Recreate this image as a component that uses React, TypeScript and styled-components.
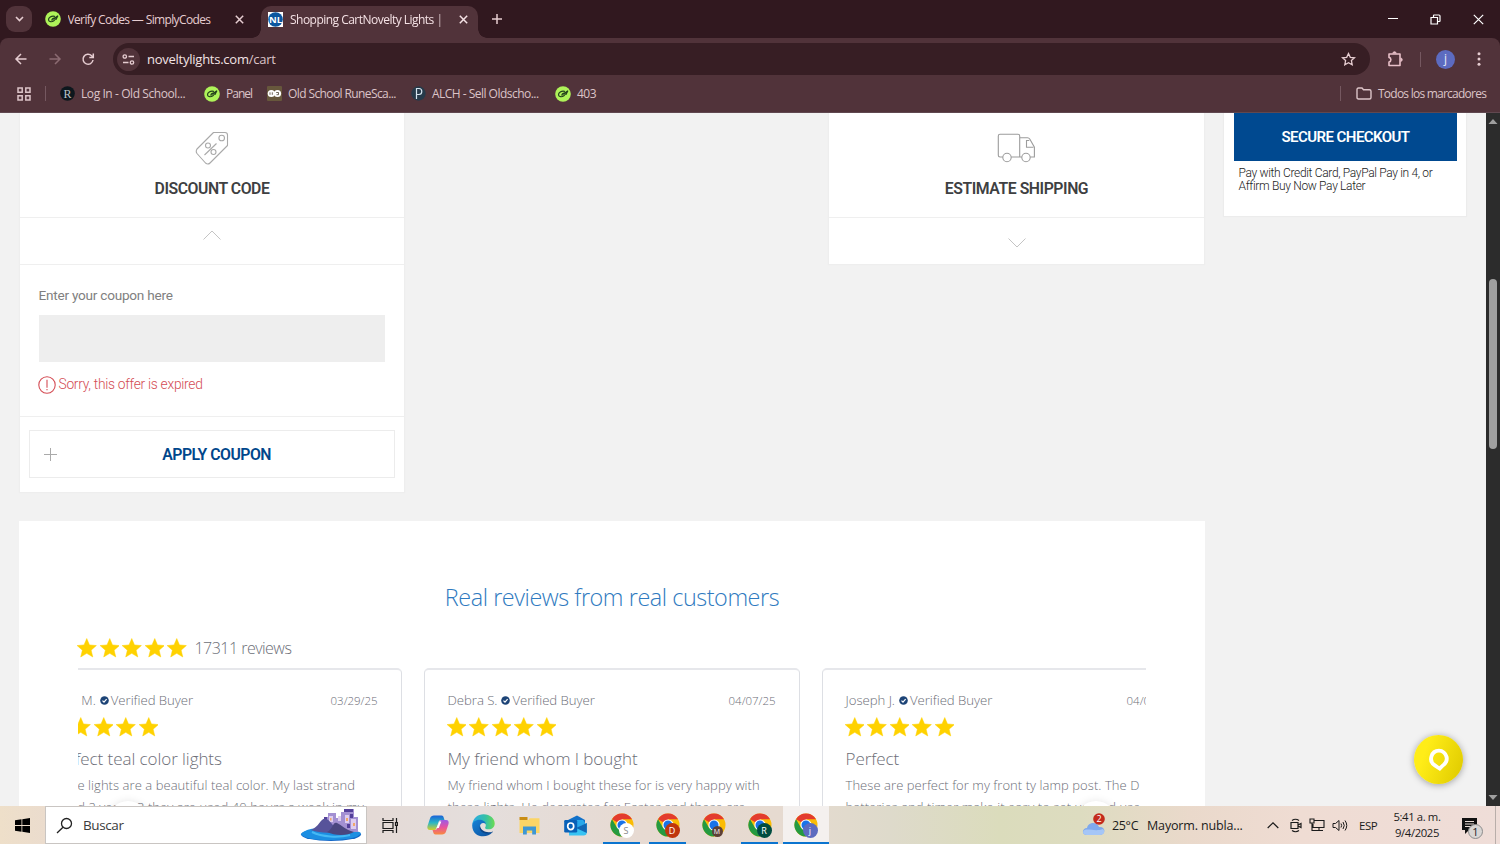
import React from "react";
import styled, { createGlobalStyle, css } from "styled-components";

const ui = `"Open Sans", "Noto Sans", sans-serif`;

const Global = createGlobalStyle`
  *, *::before, *::after { box-sizing: border-box; }
  html, body { margin: 0; padding: 0; }
  body { width: 1500px; height: 844px; overflow: hidden; background: #f2f2f2; font-family: ${ui}; }
  svg { display: block; flex: none; }
`;

const Screen = styled.div`
  width: 1500px;
  height: 844px;
  display: flex;
  flex-direction: column;
  overflow: hidden;
`;

/* A label with a fixed slot width, so neighbours keep their place */
const Label = styled.span<{ $w?: number; $size?: number; $ls?: number; $color?: string }>`
  display: block;
  flex: none;
  width: ${(p) => (p.$w ? `${p.$w}px` : "auto")};
  font-size: ${(p) => p.$size ?? 12}px;
  letter-spacing: ${(p) => p.$ls ?? 0}px;
  color: ${(p) => p.$color ?? "inherit"};
  white-space: nowrap;
`;

/* ---------- Browser chrome ---------- */

const TabStrip = styled.div`
  height: 38px;
  flex: none;
  display: flex;
  align-items: center;
  background: #31181f;
  color: #e6cdd1;
  padding-left: 6px;
`;

const TabSearch = styled.div`
  width: 26px;
  height: 26px;
  border-radius: 9px;
  background: #51333a;
  display: flex;
  align-items: center;
  justify-content: center;
`;

const Tab = styled.div<{ $active?: boolean }>`
  position: relative;
  height: 32px;
  margin-top: 6px;
  width: ${(p) => (p.$active ? 217 : 229)}px;
  padding: 0 ${(p) => (p.$active ? 10 : 17)}px 6px ${(p) => (p.$active ? 7 : 12.5)}px;
  display: flex;
  align-items: center;
  ${(p) =>
    p.$active &&
    css`
      background: #51333a;
      border-radius: 10px 10px 0 0;
      color: #f5e2e5;
      &::before,
      &::after {
        content: "";
        position: absolute;
        bottom: 0;
        width: 9px;
        height: 9px;
      }
      &::before {
        left: -9px;
        background: radial-gradient(circle at 0 0, transparent 8.5px, #51333a 9px);
      }
      &::after {
        right: -9px;
        background: radial-gradient(circle at 100% 0, transparent 8.5px, #51333a 9px);
      }
    `}
`;

const TabTitle = styled.span<{ $fade?: boolean; $ls: number }>`
  flex: 1;
  margin-left: 7px;
  margin-right: ${(p) => (p.$fade ? 13 : 9)}px;
  overflow: hidden;
  white-space: nowrap;
  font-size: 12px;
  letter-spacing: ${(p) => p.$ls}px;
  ${(p) => p.$fade && css`mask-image: linear-gradient(90deg, #000 92%, transparent 108%);`}
`;

const NewTab = styled.div`
  flex: 1;
  padding-left: 13px;
`;

const WindowControls = styled.div`
  display: flex;
  width: 129px;
`;

const WindowControl = styled.div`
  width: 43px;
  display: flex;
  justify-content: center;
`;

const ToolbarBack = styled.div`
  flex: none;
  background: #31181f;
`;

const Toolbar = styled.div`
  height: 42px;
  background: #51333a;
  border-radius: 8px 8px 0 0;
  display: flex;
  align-items: center;
  color: #e6cdd1;
  padding: 0 12px 0 12px;
`;

const NavButtons = styled.div`
  width: 101px;
  display: flex;
  gap: 15.5px;
`;

const Omnibox = styled.div`
  width: 1257px;
  height: 32px;
  border-radius: 16px;
  background: #371e24;
  display: flex;
  align-items: center;
  padding: 0 14px 0 4px;
`;

const SiteInfo = styled.div`
  width: 23px;
  height: 23px;
  border-radius: 50%;
  background: #51333a;
  display: flex;
  align-items: center;
  justify-content: center;
  margin-right: 7px;
`;

const Url = styled.span`
  flex: 1;
  font-size: 13px;
  letter-spacing: -0.25px;
  color: #f3e3e5;
  em {
    font-style: normal;
    color: #dcc4c8;
  }
`;

const ToolbarActions = styled.div`
  flex: 1;
  display: flex;
  align-items: center;
  padding-left: 16px;
`;

const ToolDivider = styled.i<{ $ml: number; $mr: number }>`
  width: 1px;
  height: 15px;
  background: #755860;
  margin: 0 ${(p) => p.$mr}px 0 ${(p) => p.$ml}px;
`;

const Avatar = styled.div`
  width: 19px;
  height: 19px;
  border-radius: 50%;
  background: #5c6bc0;
  color: #e8eaf6;
  font-size: 12px;
  line-height: 17px;
  text-align: center;
`;

const BookmarksBar = styled.div`
  height: 33px;
  background: #51333a;
  border-bottom: 1px solid #604850;
  display: flex;
  align-items: center;
  padding: 0 12px 5px 17px;
  color: #dcc4c8;
`;

const Bookmark = styled.div`
  display: flex;
  align-items: center;
  gap: 6px;
`;

const Spacer = styled.div`
  flex: 1;
`;

/* ---------- Page ---------- */

const Viewport = styled.div`
  height: 693px;
  flex: none;
  display: flex;
  background: #f2f2f2;
  overflow: hidden;
`;

const Page = styled.main`
  position: relative;
  flex: 1;
  display: flex;
  align-items: flex-start;
  padding-left: 19px;
  gap: 19px;
  font-family: Roboto, sans-serif;
`;

const MainColumn = styled.div`
  width: 1186px;
`;

const CartTools = styled.div`
  height: 408px;
  display: flex;
  justify-content: space-between;
  align-items: flex-start;
  padding: 0 1px;
`;

const ToolCard = styled.section<{ $w: number }>`
  width: ${(p) => p.$w}px;
  background: #fff;
  box-shadow: 0 0 1px 1px #eee;
`;

const CardHead = styled.header`
  height: 105px;
  display: flex;
  flex-direction: column;
  align-items: center;
  border-bottom: 1px solid #efefef;
`;

const HeadIcon = styled.div`
  height: 65px;
  padding-top: 18px;
`;

const CardTitle = styled.h2`
  margin: 0;
  font-size: 15.8px;
  line-height: 21px;
  font-weight: 600;
  letter-spacing: -0.45px;
  color: #3e4042;
`;

const ToggleRow = styled.div<{ $pt: number; $line?: boolean }>`
  height: ${(p) => (p.$line ? 47 : 46)}px;
  padding-top: ${(p) => p.$pt}px;
  display: flex;
  justify-content: center;
  align-items: flex-start;
  ${(p) => p.$line && css`border-bottom: 1px solid #efefef;`}
`;

const CouponForm = styled.div`
  height: 152px;
  padding: 21px 19px 0 18.5px;
  border-bottom: 1px solid #efefef;
`;

const CouponLabel = styled.label`
  display: block;
  font-size: 13.6px;
  line-height: 19px;
  letter-spacing: -0.24px;
  color: #808080;
`;

const CouponInput = styled.div`
  height: 47px;
  margin-top: 10px;
  background: #eee;
`;

const CouponError = styled.div`
  display: flex;
  align-items: center;
  gap: 3px;
  margin-top: 13px;
  margin-left: -1px;
  font-size: 13.8px;
  font-weight: 300;
  line-height: 19px;
  letter-spacing: -0.28px;
  color: #d44c54;
`;

const ApplyButton = styled.button`
  width: 366px;
  height: 48px;
  margin: 13px 9px 14px;
  padding: 0 123px 0 14px;
  display: flex;
  align-items: center;
  justify-content: space-between;
  background: #fff;
  border: 1px solid #ececec;
  font: 600 15.8px Roboto, sans-serif;
  letter-spacing: -0.5px;
  color: #00468b;
`;

const CheckoutCard = styled.aside`
  width: 242px;
  height: 103px;
  background: #fff;
  box-shadow: 0 0 1px 1px #ececec;
  padding: 0 10px;
`;

const CheckoutButton = styled.button`
  width: 223px;
  height: 48px;
  display: block;
  border: 0;
  padding: 0;
  background: #004990;
  color: #fff;
  font: 600 15px Roboto, sans-serif;
  letter-spacing: -0.56px;
`;

const PayNote = styled.p`
  margin: 5.5px 0 0 4.5px;
  font-size: 12px;
  font-weight: 300;
  line-height: 13px;
  letter-spacing: -0.33px;
  color: #222;
`;

const Reviews = styled.section`
  height: 300px;
  background: #fff;
  padding: 0 59px;
  font-family: "Open Sans", sans-serif;
  font-weight: 300;
`;

const ReviewsTitle = styled.h2`
  margin: 0;
  padding-top: 59px;
  font-size: 23.4px;
  letter-spacing: -0.44px;
  line-height: 34px;
  font-weight: 300;
  text-align: center;
  color: #2f7ac0;
`;

const Summary = styled.div`
  display: flex;
  align-items: center;
  height: 22px;
  margin: 23px 0 0 -1px;
  gap: 8px;
  color: #6c6e77;
  font-size: 16px;
  line-height: 24px;
  letter-spacing: -0.52px;
`;

const Carousel = styled.div`
  position: relative;
  width: 1068px;
  margin-top: 9px;
  overflow: hidden;
`;

const Track = styled.div`
  display: flex;
  gap: 22.5px;
  margin-left: -52px;
`;

const ReviewCard = styled.article`
  width: 375.5px;
  flex: none;
  height: 200px;
  border: 1px solid #dddfe4;
  border-top: 2px solid #e6e7eb;
  border-radius: 5px;
  padding: 20px 23px 0 22.5px;
  color: #6c6e77;
`;

const ReviewMeta = styled.div`
  display: flex;
  align-items: center;
  height: 20px;
  font-size: 13.2px;
  letter-spacing: -0.04px;
`;

const Verified = styled.span`
  display: flex;
  align-items: center;
  gap: 2px;
  margin-left: 4px;
  flex: 1;
`;

const ReviewDate = styled.time`
  font-size: 11.5px;
`;

const Stars = styled.div`
  display: flex;
  gap: 3px;
  height: 20px;
`;

const ReviewStars = styled(Stars)`
  margin: 7px 0 0 -1px;
`;

const ReviewTitle = styled.h3`
  margin: 9px 0 0;
  font-size: 17px;
  line-height: 26px;
  letter-spacing: -0.06px;
  font-weight: 300;
`;

const ReviewText = styled.p`
  margin: 2px 0 0;
  font-size: 13px;
  line-height: 22px;
  letter-spacing: 0.06px;
  white-space: pre;
`;

const CarouselArrow = styled.div<{ $x: number }>`
  position: absolute;
  left: ${(p) => p.$x}px;
  top: 133px;
  width: 40px;
  height: 40px;
  border-radius: 50%;
  background: #fff;
  box-shadow: 0 0 8px rgba(0, 0, 0, 0.1);
`;

const ChatBubble = styled.div`
  position: absolute;
  left: 1414px;
  top: 622px;
  width: 49px;
  height: 49px;
  border-radius: 50%;
  background: linear-gradient(110deg, #ffed18 25%, #e0cb00 95%);
  box-shadow: 0 1px 7px rgba(0, 0, 0, 0.35);
  display: flex;
  align-items: center;
  justify-content: center;
`;

const Scrollbar = styled.div`
  width: 14px;
  background: #2c2c2c;
  display: flex;
  flex-direction: column;
  align-items: center;
  padding: 6px 0 6px;
`;

const Thumb = styled.div`
  width: 8px;
  height: 170px;
  margin-top: 155px;
  margin-bottom: auto;
  border-radius: 4px;
  background: #9f9f9f;
`;

/* ---------- Taskbar ---------- */

const Taskbar = styled.footer`
  height: 38px;
  flex: none;
  display: flex;
  align-items: center;
  color: #1b1b1b;
  background: linear-gradient(
    90deg, #eedfc9 0, #eadbcf 60px, #e4dad6 375px, #e4dedc 480px, #e7dad2 640px,
    #e6dad0 780px, #dedacb 890px, #dbdcbc 1000px, #dddcc0 1080px, #ead9cb 1190px, #efdcd3 1300px, #efddd8 1500px
  );
`;

const TaskSlot = styled.div<{ $running?: boolean; $active?: boolean }>`
  position: relative;
  width: 46px;
  height: 38px;
  flex: none;
  display: flex;
  align-items: center;
  justify-content: center;
  background: ${(p) => (p.$active ? "#f4f0ee" : "transparent")};
  ${(p) =>
    (p.$running || p.$active) &&
    css`
      &::after {
        content: "";
        position: absolute;
        bottom: 0;
        left: ${p.$active ? 0 : 4}px;
        right: ${p.$active ? 0 : 5}px;
        height: 2px;
        background: #0b74cf;
      }
    `}
`;

const StartSlot = styled(TaskSlot)`
  width: 45px;
`;

const TaskApps = styled.div`
  display: flex;
  width: 715px;
`;

const TaskTail = styled.div`
  display: flex;
  margin-left: 1.5px;
`;

const SearchBox = styled.div`
  width: 322px;
  height: 38px;
  background: #fff;
  border: 1px solid #c9c5c2;
  display: flex;
  align-items: center;
  padding: 0 4px 0 10px;
  gap: 10px;
  color: #3c3c3c;
`;

const Badge = styled.span<{ $bg: string; $fg?: string; $small?: boolean }>`
  position: absolute;
  left: ${(p) => (p.$small ? 21 : 20)}px;
  top: ${(p) => (p.$small ? 20 : 17)}px;
  width: ${(p) => (p.$small ? 11 : 15)}px;
  height: ${(p) => (p.$small ? 11 : 15)}px;
  border-radius: 50%;
  background: ${(p) => p.$bg};
  color: ${(p) => p.$fg ?? "#fff"};
  font-size: ${(p) => (p.$small ? 7 : 9)}px;
  line-height: ${(p) => (p.$small ? 11 : 15)}px;
  text-align: center;
`;

const Tray = styled.div`
  flex: 1;
  display: flex;
  align-items: center;
  font-size: 12px;
`;

const TrayIcons = styled.div`
  display: flex;
  align-items: center;
  gap: 7px;
  width: 92px;
`;

const Clock = styled.div`
  width: 60px;
  text-align: center;
  font-size: 11.3px;
  line-height: 16px;
  letter-spacing: -0.38px;
`;

const Notifications = styled.div`
  position: relative;
  width: 49px;
  height: 38px;
  padding: 12px 0 0 15px;
  border-right: 1px solid #b9aeaa;
`;

const NoteCount = styled.span`
  position: absolute;
  left: 21px;
  top: 18px;
  width: 15px;
  height: 15px;
  border: 1px solid #8c8c8c;
  border-radius: 50%;
  background: #d9d6d4;
  font-size: 11px;
  line-height: 13px;
  text-align: center;
`;

/* ---------- Icons ---------- */

type StrokeProps = { w: number; h: number; d: string; sw?: number; color?: string };
const Stroke = ({ w, h, d, sw = 1.5, color = "currentColor" }: StrokeProps) => (
  <svg width={w} height={h} viewBox={`0 0 ${w} ${h}`} fill="none" stroke={color} strokeWidth={sw}>
    <path d={d} />
  </svg>
);

const Close = () => <Stroke w={9} h={9} d="M.8.8l7.4 7.4M8.2.8L.8 8.2" sw={1.5} />;

const SimplyIcon = () => (
  <svg width="16" height="16" viewBox="0 0 16 16">
    <circle cx="8" cy="8" r="7.800" fill="#aef359" />
    <g fill="none" stroke="#23401c" strokeWidth="1.200" strokeLinecap="round">
      <path d="M9.500 5.400C6.500 4.600 3.300 6.800 3.500 9c.3 2 3.400 2.300 5.400.7 1.600-1.200 1.700-2.600.4-2.600-1.500 0-2.700 1.200-2.300 2.200" />
      <path d="M8 8.300l4.900-3.500-1.900 3.600" />
    </g>
  </svg>
);

const NoveltyIcon = () => (
  <svg width="15" height="15" viewBox="0 0 15 15">
    <rect width="15" height="15" fill="#fff" />
    <circle cx="7.500" cy="7.500" r="7.300" fill="#0b569f" />
    <text x="7.500" y="11" textAnchor="middle" fontSize="9.500" fontWeight="700" fill="#fff" fontFamily="Open Sans">NL</text>
  </svg>
);

const RuneIcon = () => (
  <svg width="15" height="15" viewBox="0 0 15 15">
    <circle cx="7.500" cy="7.500" r="7.300" fill="#0d171d" />
    <text x="7.500" y="12" textAnchor="middle" fontSize="12" fill="#b9c4c8" fontFamily="Liberation Serif">R</text>
  </svg>
);

const OsrsIcon = () => (
  <svg width="15" height="15" viewBox="0 0 15 15">
    <rect width="15" height="15" rx="1" fill="#67573c" />
    <circle cx="4.300" cy="7.500" r="3.600" fill="#fff" />
    <circle cx="10.500" cy="7.500" r="3.600" fill="#fff" />
    <path d="M3 6.300v2.500M5.300 6.300v2.500M9.200 6.500h2.300v2.200H9.500" stroke="#4c4030" fill="none" strokeWidth=".8" />
  </svg>
);

const AlchIcon = () => (
  <svg width="15" height="15" viewBox="0 0 15 15">
    <circle cx="7.500" cy="7.500" r="7.200" fill="#263a4a" />
    <path d="M5.500 13V2.500H8c3.700 0 3.700 6 0 6H5.500" fill="none" stroke="#d5e4ef" strokeWidth="1.200" />
  </svg>
);

const Star = () => (
  <svg width="19.500" height="20" viewBox="0 0 20 20">
    <path d="M10 .3l2.800 6.500 7.100.700-5.400 4.700 1.700 7L10 15.500l-6.200 3.700 1.700-7L.1 7.500l7.100-.700z" fill="#ffd200" stroke="#ffd200" strokeWidth=".5" />
  </svg>
);

const Check = () => (
  <svg width="9" height="9" viewBox="0 0 9 9">
    <circle cx="4.500" cy="4.500" r="4.300" fill="#1d4477" />
    <path d="M2.500 4.600l1.500 1.500 2.600-2.900" fill="none" stroke="#fff" strokeWidth="1.200" />
  </svg>
);

const TagIcon = () => (
  <svg width="34" height="35" viewBox="0 0 34 35" fill="none" stroke="#a9a9a9" strokeWidth="1.100">
    <path d="M18.500 1.500H30q2.500 0 2.500 2.500v10.500L15 32q-2 2-4.500 0L2 22.500q-1.500-2 0-4.500z" strokeLinejoin="round" />
    <circle cx="26.700" cy="7" r="2.800" />
    <circle cx="13" cy="14.500" r="2.500" />
    <circle cx="18.500" cy="21" r="2.500" />
    <path d="M9.500 24L21.500 12.500" />
  </svg>
);

const TruckIcon = () => (
  <svg width="39" height="33" viewBox="0 -2 39 33" fill="none" stroke="#9c9c9c" strokeWidth="1.100">
    <path d="M5.800 24H3q-1.700 0-1.700-1.700V3Q1.300 1.300 3 1.300h18q1.700 0 1.700 1.700v21H14.200M22.700 4.800h7.800q1.500 0 2.400 1.400l4.500 8V24h-4.200M24.800 24h-2" />
    <path d="M36.500 14.300h-7V7.500h2.800" />
    <circle cx="10" cy="24.500" r="4.200" />
    <circle cx="29" cy="24.500" r="4.200" />
  </svg>
);

const ChromeIcon = () => (
  <svg width="24" height="24" viewBox="0 0 24 24">
    <circle cx="12" cy="12" r="11.500" fill="#fbbc04" />
    <path d="M12 12L2 6.300A11.500 11.500 0 0 1 22 6.300H12z" fill="#e33b2e" />
    <path d="M2 6.200A11.500 11.500 0 0 0 12 23.500l5-8.700L12 12 7 14.800z" fill="#249a41" />
    <circle cx="12" cy="12" r="5.600" fill="#fff" />
    <circle cx="12" cy="12" r="4.500" fill="#1a73e8" />
  </svg>
);

const EdgeIcon = () => (
  <svg width="23" height="23" viewBox="0 0 24 24">
    <defs>
      <linearGradient id="edgeTop" x1="0" x2="1"><stop offset="0" stopColor="#2aa9e8" /><stop offset=".6" stopColor="#35c1a5" /><stop offset="1" stopColor="#6bdc50" /></linearGradient>
      <linearGradient id="edgeLow" x1="0" x2="1" y2="1"><stop offset="0" stopColor="#1583d8" /><stop offset="1" stopColor="#0c4f9c" /></linearGradient>
    </defs>
    <path d="M.3 11C1 4.500 6 .3 12 .3c7 0 11.700 4.700 11.700 9.700 0 4-3 6-6 6-3.500 0-4.500-1.300-3.800-2.300 1.200-2 .4-5.200-3.400-5.200C6 8.500.8 9 .3 11z" fill="url(#edgeTop)" />
    <path d="M.2 12C.3 8.500 3.800 6 7.800 6c3.500 0 6.300 2 6.700 4.300-4-2.200-6.800.5-6 4 .9 4 6 7 12.800 4.700C16 26 .2 25 .2 12z" fill="url(#edgeLow)" />
    <path d="M8.400 12.500C6.500 17 12 23 21.500 19c.5-.4.3-.8-.3-.6-6 1.600-11.600-.4-12.800-5.900z" fill="#0a4589" />
  </svg>
);

const CopilotIcon = () => (
  <svg width="22" height="20" viewBox="0 0 22 20">
    <defs>
      <linearGradient id="copA" y2="1" x2="0"><stop offset="0" stopColor="#1b62d8" /><stop offset=".5" stopColor="#2ab6c6" /><stop offset="1" stopColor="#d6cf28" /></linearGradient>
      <linearGradient id="copB" y2="1" x2="0"><stop offset="0" stopColor="#9a5ae8" /><stop offset=".5" stopColor="#e8529f" /><stop offset="1" stopColor="#f98a3c" /></linearGradient>
    </defs>
    <path d="M7 .5h7.500c1.500 0 2 1 2.500 3L17.500 5h-3c-2 0-2.800 1-3.300 3L9.500 13c-.6 1.700-1.500 2-3 2H3c-2.500 0-3-2-2.500-4L3 3.500C3.800 1.200 5 .5 7 .5z" fill="url(#copA)" />
    <path d="M15 19.500H8.500c-1.500 0-2-1-2.500-3L5.500 15h2c2 0 2.800-1 3.300-3L12.500 7c.6-1.700 1.500-2 3-2H19c2.500 0 3 2 2.500 4L19 16.500c-.8 2.300-2 3-4 3z" fill="url(#copB)" />
    <path d="M12.500 6.500h1.800L11.800 13H9.500z" fill="#fff" />
  </svg>
);

const FolderIcon = () => (
  <svg width="21" height="19" viewBox="0 0 21 19">
    <path d="M.5 1h8v3H.5z" fill="#c98d14" />
    <path d="M.5 4h9l1-1.700H20.500V17H.5z" fill="#fbd566" />
    <path d="M4 18.500v-8h13v8h-3.800v-4H7.800v4z" fill="#3f97d3" />
  </svg>
);

const OutlookIcon = () => (
  <svg width="23" height="21" viewBox="0 0 23 21">
    <path d="M4 5L13 .5 21 5v8H4z" fill="#1271c9" />
    <path d="M10 5h9l2 3v8H8z" fill="#28a8ea" />
    <path d="M5 20.500h14.500q3.300 0 3.300-3V8L5 17z" fill="#38c3f3" />
    <path d="M22.800 8v10L12 13z" fill="#1267b4" />
    <rect x=".2" y="5" width="13" height="12.500" rx="1.200" fill="#0861b8" />
    <ellipse cx="6.700" cy="11.300" rx="3" ry="3.300" fill="none" stroke="#fff" strokeWidth="1.700" />
  </svg>
);

const IslandArt = () => (
  <svg width="62" height="34" viewBox="0 0 62 34">
    <ellipse cx="31" cy="26.500" rx="30" ry="6.500" fill="#1368c8" />
    <path d="M1 26C8 19 18 20 30 22c12 1 24-1 31 3-3 6-19 7-32 7C14 32 3 30 1 26z" fill="#1c8fe2" />
    <path d="M12 24C22 29 38 30 50 27" stroke="#45b9f4" strokeWidth="2" fill="none" />
    <path d="M28 5h8v5h5V4h4V1h9v8h4v15H24V9h4z" fill="#a390d2" />
    <path d="M29 8h4v6h-4zM45 7h4v8h-4zM51 11h5v10h-5zM38 8h3v5h-3z" fill="#decdf0" />
    <path d="M44 1h9v3h-9zM24 9h3v3h-3zM50 6h3v4h-3zM47 16h3v4h-3z" fill="#54409a" />
    <path d="M11 22C20 18 21 9 26 11c4 1 7 7 12 12-8 3-18 2-27-1z" fill="#57539a" />
    <path d="M27 24c6-3 6-11 10-9 5 2 8 7 17 9-7 4-19 4-27 0z" fill="#4a467f" />
    <path d="M46 10h2v3h-2zM53 15h2v3h-2zM30 10h1.500v2.500H30z" fill="#f0a76b" />
  </svg>
);

const CloudIcon = () => (
  <svg width="24" height="24" viewBox="0 0 24 24">
    <path d="M5 22C-1 22 0 15 5 15c1-6 10-7 12-1 7-1 7 8 1 8z" fill="#7fa9ec" />
    <path d="M5 22C0 22 0 17 4 16.500c5-.500 10 2 17-.500 3 3 0 6-3 6z" fill="#a5c6f7" />
    <circle cx="17" cy="6" r="5.800" fill="#c42b1c" />
    <text x="17" y="9.300" fontSize="9" textAnchor="middle" fill="#fff" fontFamily="Open Sans">2</text>
  </svg>
);

const StarRow = () => <>{[0, 1, 2, 3, 4].map((i) => <Star key={i} />)}</>;

/* ---------- Data ---------- */

const bookmarks = [
  { icon: <RuneIcon />, text: "Log In - Old School...", w: 123, ls: -0.42 },
  { icon: <SimplyIcon />, text: "Panel", w: 41, ls: -1 },
  { icon: <OsrsIcon />, text: "Old School RuneSca...", w: 123, ls: -0.6 },
  { icon: <AlchIcon />, text: "ALCH - Sell Oldscho...", w: 123, ls: -0.52 },
  { icon: <SimplyIcon />, text: "403", w: 30, ls: -0.5 },
];

const reviews = [
  { name: "Erica M.", date: "03/29/25", title: "Perfect teal color lights", text: "These lights are a beautiful teal color. My last strand\nlasted 2 years, 3 they are used 40 hours a week in my" },
  { name: "Debra S.", date: "04/07/25", title: "My friend whom I bought", text: "My friend whom I bought these for is very happy with\nthese lights. He decorates for Easter and these are" },
  { name: "Joseph J.", date: "04/07/25", title: "Perfect", text: "These are perfect for my front ty lamp post. The D\nbatteries and timer make it easy to set up and use" },
];

const chromeWindows = [
  { mark: "S", bg: "#fff", fg: "#888", running: true },
  { mark: "D", bg: "#bf360c", running: true },
  { mark: "M", bg: "#5d4037", small: true },
  { mark: "R", bg: "#004d40", running: true },
  { mark: "j", bg: "#5c6bc0", active: true },
];

const BrowserFrame = () => (
  <>
    <TabStrip>
      <TabSearch><Stroke w={9} h={6} d="M1 1l3.500 3.500L8 1" sw={1.600} /></TabSearch>
      <Tab>
        <SimplyIcon />
        <TabTitle $ls={-0.64}>Verify Codes — SimplyCodes</TabTitle>
        <Close />
      </Tab>
      <Tab $active>
        <NoveltyIcon />
        <TabTitle $fade $ls={-0.52}>Shopping CartNovelty Lights | LED</TabTitle>
        <Close />
      </Tab>
      <NewTab><Stroke w={12} h={12} d="M6 1v10M1 6h10" /></NewTab>
      <WindowControls>
        <WindowControl><Stroke w={10} h={10} d="M0 4.500h10" sw={1} color="#fff" /></WindowControl>
        <WindowControl><Stroke w={11} h={11} d="M1 3.500h6.500V10H1zM3.500 3V1.500q0-.500.500-.500h5q1 0 1 1v5q0 .500-.500.500H8" sw={1.200} color="#fff" /></WindowControl>
        <WindowControl><Stroke w={11} h={11} d="M.8.8l9.400 9.400M10.200.8L.8 10.200" sw={1.200} color="#fff" /></WindowControl>
      </WindowControls>
    </TabStrip>
    <ToolbarBack>
      <Toolbar>
        <NavButtons>
          <Stroke w={18} h={18} d="M14.500 9H4M9 4L4 9l5 5" sw={1.500} />
          <Stroke w={18} h={18} d="M3.500 9H14M9 4l5 5-5 5" sw={1.500} color="#8b6b72" />
          <Stroke w={18} h={18} d="M14 10a5 5 0 1 1-1.400-4.300L14.200 7.200M14.300 3.500v4h-4" sw={1.500} />
        </NavButtons>
        <Omnibox>
          <SiteInfo>
            <svg width="13" height="11" viewBox="0 0 13 11" fill="none" stroke="#e6cdd1" strokeWidth="1.300">
              <circle cx="2.800" cy="2.500" r="1.700" /><path d="M6.500 2.500H12M1 8.500h5.500" /><circle cx="10" cy="8.500" r="1.700" />
            </svg>
          </SiteInfo>
          <Url>noveltylights.com<em>/cart</em></Url>
          <Stroke w={15} h={14} d="M7.500 1.500l1.800 3.800 4.200.5-3.100 2.800.8 4.100-3.700-2-3.700 2 .8-4.100L1.500 5.800l4.200-.5z" sw={1.300} />
        </Omnibox>
        <ToolbarActions>
          <svg width="18" height="18" viewBox="0 0 18 18" fill="none" stroke="#e8c0c8" strokeWidth="1.600">
            <path d="M3 4h11v11.500H3v-3.400c2.500-.5 2.500-4.200 0-4.700z" strokeLinejoin="round" />
            <path d="M6.800 3.500a1.700 1.700 0 0 1 3.400 0M14.500 8a1.700 1.700 0 0 1 0 3.400" fill="#e8c0c8" strokeWidth="1" />
          </svg>
          <ToolDivider $ml={16} $mr={15} />
          <Avatar>j</Avatar>
          <Spacer />
          <svg width="18" height="14" viewBox="0 0 18 14" fill="#e6cdd1"><circle cx="9" cy="1.800" r="1.500" /><circle cx="9" cy="7" r="1.500" /><circle cx="9" cy="12.200" r="1.500" /></svg>
        </ToolbarActions>
      </Toolbar>
      <BookmarksBar>
        <Stroke w={14} h={14} d="M1 1h4.200v4.200H1zM8.800 1H13v4.200H8.800zM1 8.800h4.200V13H1zM8.800 8.800H13V13H8.800z" sw={1.500} />
        <ToolDivider $ml={14} $mr={14} />
        {bookmarks.map((b, i) => (
          <Bookmark key={i}>{b.icon}<Label $w={b.w} $ls={b.ls}>{b.text}</Label></Bookmark>
        ))}
        <Spacer />
        <ToolDivider $ml={0} $mr={15} />
        <Bookmark>
          <Stroke w={16} h={13} d="M1 10.500v-8q0-1.500 1.500-1.500H6l1.500 1.700h6q1.500 0 1.500 1.500v6.300q0 1.500-1.500 1.500h-11Q1 12 1 10.500z" sw={1.400} />
          <Label $w={110} $size={12} $ls={-0.76}>Todos los marcadores</Label>
        </Bookmark>
      </BookmarksBar>
    </ToolbarBack>
  </>
);

const CartPage = () => (
  <Viewport>
    <Page>
      <MainColumn>
        <CartTools>
          <ToolCard $w={384}>
            <CardHead><HeadIcon><TagIcon /></HeadIcon><CardTitle>DISCOUNT CODE</CardTitle></CardHead>
            <ToggleRow $pt={12} $line><Stroke w={18} h={10} d="M.5 9.500L9 1l8.500 8.500" sw={1} color="#c4c4c4" /></ToggleRow>
            <CouponForm>
              <CouponLabel>Enter your coupon here</CouponLabel>
              <CouponInput />
              <CouponError>
                <Stroke w={18} h={18} d="M9 .8a8.200 8.200 0 1 1 0 16.400A8.200 8.200 0 0 1 9 .8M9 3.800v8M9 13v1.300" sw={1.100} />
                Sorry, this offer is expired
              </CouponError>
            </CouponForm>
            <ApplyButton>
              <Stroke w={13} h={13} d="M6.500 0v13M0 6.500h13" sw={1} color="#aaa" />
              APPLY COUPON
            </ApplyButton>
          </ToolCard>
          <ToolCard $w={375}>
            <CardHead><HeadIcon><TruckIcon /></HeadIcon><CardTitle>ESTIMATE SHIPPING</CardTitle></CardHead>
            <ToggleRow $pt={20}><Stroke w={18} h={10} d="M.5.500L9 9l8.500-8.500" sw={1} color="#c4c4c4" /></ToggleRow>
          </ToolCard>
        </CartTools>
        <Reviews>
          <ReviewsTitle>Real reviews from real customers</ReviewsTitle>
          <Summary><Stars><StarRow /></Stars>17311 reviews</Summary>
          <Carousel>
            <Track>
              {reviews.map((r) => (
                <ReviewCard key={r.name}>
                  <ReviewMeta>
                    {r.name}
                    <Verified><Check />Verified Buyer</Verified>
                    <ReviewDate>{r.date}</ReviewDate>
                  </ReviewMeta>
                  <ReviewStars><StarRow /></ReviewStars>
                  <ReviewTitle>{r.title}</ReviewTitle>
                  <ReviewText>{r.text}</ReviewText>
                </ReviewCard>
              ))}
            </Track>
            <CarouselArrow $x={30} />
            <CarouselArrow $x={998} />
          </Carousel>
        </Reviews>
      </MainColumn>
      <CheckoutCard>
        <CheckoutButton>SECURE CHECKOUT</CheckoutButton>
        <PayNote>Pay with Credit Card, PayPal Pay in 4, or<br />Affirm Buy Now Pay Later</PayNote>
      </CheckoutCard>
      <ChatBubble>
        <svg width="22" height="24" viewBox="0 0 22 24" fill="#fff">
          <path
            fillRule="evenodd"
            d="M11 .8a9.800 9.800 0 0 1 4.600 18.400L12 23 5.800 18.900A9.800 9.800 0 0 1 11 .8zM11 4.400a6.200 6.200 0 0 0-3.400 11.200L11.300 18.300l3.300-3A6.200 6.200 0 0 0 11 4.400z"
          />
        </svg>
      </ChatBubble>
    </Page>
    <Scrollbar>
      <svg width="10" height="5" viewBox="0 0 10 5"><path d="M5 0l4.500 5h-9z" fill="#9f9f9f" /></svg>
      <Thumb />
      <svg width="10" height="5" viewBox="0 0 10 5"><path d="M.5 0h9L5 5z" fill="#9f9f9f" /></svg>
    </Scrollbar>
  </Viewport>
);

const WindowsTaskbar = () => (
  <Taskbar>
    <StartSlot>
      <svg width="15" height="15" viewBox="0 0 15 15"><path d="M0 2.200L6.500 1.300v5.800H0zM7.300 1.200L15 0v7.100H7.300zM0 7.900h6.500v5.800L0 12.800zM7.300 7.900H15V15l-7.700-1.200z" /></svg>
    </StartSlot>
    <SearchBox>
      <svg width="17" height="17" viewBox="0 0 17 17" fill="none" stroke="#222" strokeWidth="1.300"><circle cx="10.500" cy="6.500" r="5" /><path d="M7 10.200L1 16" /></svg>
      <Label $size={13.500} $ls={-0.4}>Buscar</Label>
      <Spacer />
      <IslandArt />
    </SearchBox>
    <TaskApps>
      <TaskSlot>
        <Stroke w={16} h={15} d="M1 0v2.500h10V0M1 15v-2.500h10V15M1 4.500h10v6H1zM14.500 0v4M14.500 8v7M13.500 4.700h2v2.600h-2z" sw={1.200} />
      </TaskSlot>
      <TaskTail>
        {[<CopilotIcon />, <EdgeIcon />, <FolderIcon />, <OutlookIcon />].map((icon, i) => <TaskSlot key={i}>{icon}</TaskSlot>)}
        {chromeWindows.map((c) => (
          <TaskSlot key={c.mark} $running={c.running} $active={c.active}>
            <ChromeIcon />
            <Badge $bg={c.bg} $fg={c.fg} $small={c.small}>{c.mark}</Badge>
          </TaskSlot>
        ))}
      </TaskTail>
    </TaskApps>
    <Tray>
      <CloudIcon />
      <Label $w={41} $size={12.500} $ls={-0.3}>&nbsp;&nbsp;25°C</Label>
      <Label $w={120} $size={12.500} $ls={-0.15}>Mayorm. nubla...</Label>
      <TrayIcons>
        <Stroke w={16} h={7} d="M.7 6L6 .8 11.300 6" sw={1.200} />
        <Stroke w={12} h={15} d="M2 2.500Q5.500 0 9 2.500M2 12.500q3.500 2.500 7 0M1 4.500h7v6H1zM8 7l3-1.500v4L8 8" sw={1.200} />
        <Stroke w={16} h={14} d="M5 2.500h10v7H4V6M10 9.500v3M6 12.500h8M1 1h4v4H1zM3 5v7.500h3" sw={1.100} />
        <Stroke w={16} h={13} d="M1 4.500h2.500L7 1.500v10l-3.500-3H1zM9 4.500q1.300 2 0 4M11 3q2.500 3.500 0 7M13 1.500q3.500 5 0 10" sw={1} />
      </TrayIcons>
      <Label $w={28} $size={11.500} $ls={-0.5}>ESP</Label>
      <Clock>5:41 a. m.<br />9/4/2025</Clock>
      <Notifications>
        <svg width="16" height="16" viewBox="0 0 16 16"><path d="M0 0h15v12H7l-4 4v-4H0z" fill="#111" /><path d="M3 3.500h9M3 6h9M3 8.500h6" stroke="#e9dcd6" strokeWidth="1" /></svg>
        <NoteCount>1</NoteCount>
      </Notifications>
    </Tray>
  </Taskbar>
);

export default function App() {
  return (
    <Screen>
      <Global />
      <BrowserFrame />
      <CartPage />
      <WindowsTaskbar />
    </Screen>
  );
}
